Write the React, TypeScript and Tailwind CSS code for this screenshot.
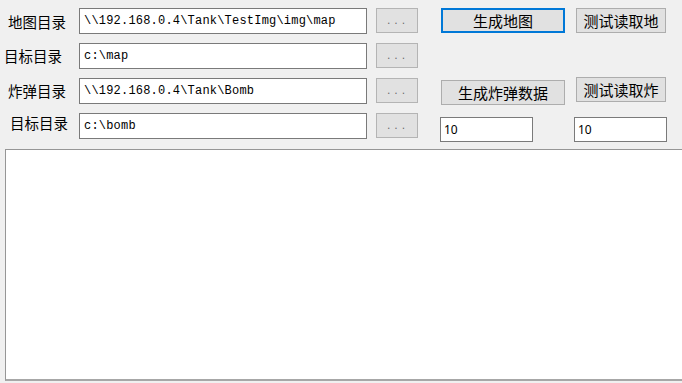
import React from 'react';

const cjk = { fontFamily: '"Noto Sans CJK SC", "Noto Sans", sans-serif' };
const mono = { fontFamily: '"Liberation Mono", "DejaVu Sans Mono", monospace' };

const PathBox: React.FC<{ value: string }> = ({ value }) => (
  <div
    className="w-[288px] h-[26px] bg-white border border-[#7a7a7a] flex items-center pl-[4px] text-[12px] tracking-[0.2px] text-black whitespace-nowrap overflow-hidden"
    style={mono}
  >
    {value}
  </div>
);

const Browse: React.FC = () => (
  <div className="ml-[9px] w-[42px] h-[25px] bg-[#e1e1e1] border border-[#b4b4b4] flex items-center justify-center">
    <span className="text-[9px] text-[#666] tracking-[2px] leading-none pt-[3px]" style={mono}>...</span>
  </div>
);

const Btn: React.FC<{ label: string; w: string; focused?: boolean; className?: string }> = ({ label, w, focused, className }) => (
  <div
    className={`${w} h-[25px] bg-[#e1e1e1] flex items-center justify-center text-[15px] text-black leading-none ${
      focused ? 'border-2 border-[#0078d7]' : 'border border-[#adadad]'
    } ${className ?? ''}`}
    style={cjk}
  >
    {label}
  </div>
);

const NumBox: React.FC<{ className?: string }> = ({ className }) => (
  <div
    className={`w-[93px] h-[25px] bg-white border border-[#7a7a7a] flex items-center pl-[3px] text-[12px] text-black ${className ?? ''}`}
    style={{ fontFamily: '"Noto Sans", "DejaVu Sans", sans-serif' }}
  >
    10
  </div>
);

const Label: React.FC<{ text: string; pad: string; shift?: string }> = ({ text, pad, shift }) => (
  <div className={`w-[79px] h-[26px] flex items-center ${pad}`}>
    <span className={`text-[14.5px] leading-none text-black ${shift ?? ''}`} style={cjk}>
      {text}
    </span>
  </div>
);

export default function App() {
  return (
    <div className="w-[682px] h-[383px] bg-[#f0f0f0] overflow-hidden">
      <div className="pt-[8px] flex flex-col gap-[9px]">
        <div className="flex items-start h-[26px]">
          <Label text="地图目录" pad="pl-[8px]" shift="mt-[2px]" />
          <PathBox value="\\192.168.0.4\Tank\TestImg\img\map" />
          <Browse />
          <Btn label="生成地图" w="w-[124px]" focused className="ml-[23px]" />
          <Btn label="测试读取地" w="w-[90px]" className="ml-[11px]" />
        </div>

        <div className="flex items-start h-[26px]">
          <Label text="目标目录" pad="pl-[4px]" />
          <PathBox value="c:\map" />
          <Browse />
        </div>

        <div className="flex items-start h-[26px]">
          <Label text="炸弹目录" pad="pl-[8px]" />
          <PathBox value="\\192.168.0.4\Tank\Bomb" />
          <Browse />
          <Btn label="生成炸弹数据" w="w-[124px]" className="ml-[23px] mt-[2px]" />
          <Btn label="测试读取炸" w="w-[90px]" className="ml-[11px] -mt-[1px]" />
        </div>

        <div className="flex items-start h-[26px]">
          <Label text="目标目录" pad="pl-[10px]" shift="-mt-[6px]" />
          <PathBox value="c:\bomb" />
          <Browse />
          <NumBox className="ml-[22px] mt-[4px] shrink-0" />
          <NumBox className="ml-[41px] mt-[4px] shrink-0" />
        </div>
      </div>

      <div className="ml-[5px] mt-[10px] w-[684px] h-[232px] bg-white border border-[#969696] border-b-2 border-b-[#a7a7a7]" />
    </div>
  );
}
